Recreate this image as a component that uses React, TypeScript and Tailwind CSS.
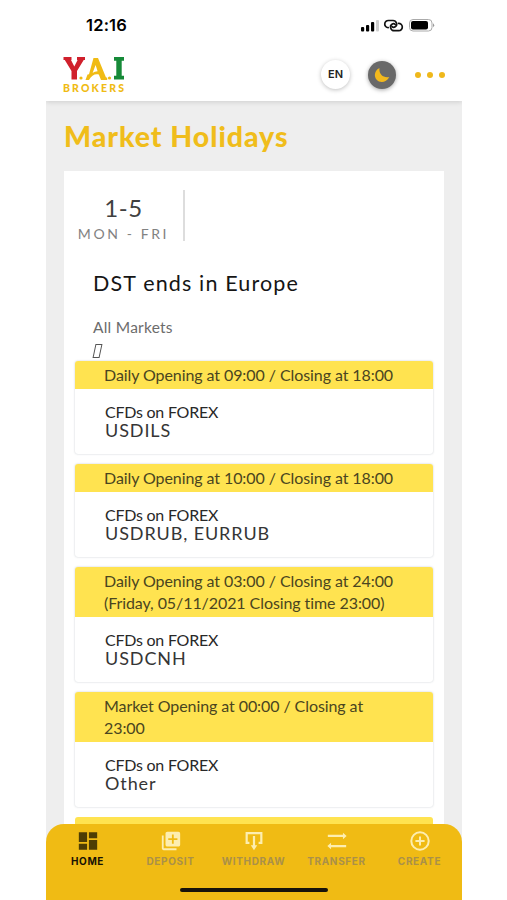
import type { ReactNode } from "react";

interface Session {
  hours: string[];
  symbols: string;
}

const sessions: Session[] = [
  { hours: ["Daily Opening at 09:00 / Closing at 18:00"], symbols: "USDILS" },
  {
    hours: ["Daily Opening at 10:00 / Closing at 18:00"],
    symbols: "USDRUB, EURRUB",
  },
  {
    hours: [
      "Daily Opening at 03:00 / Closing at 24:00",
      "(Friday, 05/11/2021 Closing time 23:00)",
    ],
    symbols: "USDCNH",
  },
  { hours: ["Market Opening at 00:00 / Closing at", "23:00"], symbols: "Other" },
];

const navItems: { label: string; icon: ReactNode }[] = [
  {
    label: "HOME",
    icon: (
      <path
        fill="#4d3d04"
        d="M2 13h9V2.500H2V13zm0 8.500h9V15H2v6.500zm11 0h9V11h-9v10.500zm0-19V9h9V2.500h-9z"
      />
    ),
  },
  {
    label: "DEPOSIT",
    icon: (
      <path
        fill="#fdeeb0"
        d="M4 6H2v14c0 1.1.9 2 2 2h14v-2H4V6zm16-4H8c-1.1 0-2 .9-2 2v12c0 1.1.9 2 2 2h12c1.1 0 2-.9 2-2V4c0-1.1-.9-2-2-2zm-1 9h-4v4h-2v-4H9V9h4V5h2v4h4v2z"
      />
    ),
  },
  {
    label: "WITHDRAW",
    icon: (
      <>
        <path
          fill="none"
          stroke="#fdeeb0"
          strokeWidth="2.4"
          d="M7 14H4V3.500h16V14h-3M12 6.500V18"
        />
        <path fill="#fdeeb0" d="M8.500 16.500h7L12 22z" />
      </>
    ),
  },
  {
    label: "TRANSFER",
    icon: (
      <>
        <path
          fill="none"
          stroke="#fdeeb0"
          strokeWidth="2.4"
          d="M2 6.500h17M5 17.500h17"
        />
        <path fill="#fdeeb0" d="M18.500 3l4 3.500-4 3.500zM5.500 14l-4 3.500 4 3.500z" />
      </>
    ),
  },
  {
    label: "CREATE",
    icon: (
      <path
        fill="none"
        stroke="#fdeeb0"
        strokeWidth="2.2"
        d="M12 2.500a9.500 9.500 0 1 0 0 19 9.500 9.500 0 0 0 0-19M12 7v10M7 12h10"
      />
    ),
  },
];

const StatusBar = () => (
  <div className="flex h-[50px] items-center justify-between pr-[27px] pl-[40px]">
    <span className="font-['Inter',sans-serif] text-[16.5px] font-semibold tracking-[0.2px] text-black">
      12:16
    </span>
    <svg width="75" height="16" viewBox="0 0 75 16">
      <rect x="1" y="10" width="3.200" height="4.500" rx="1" />
      <rect x="6" y="8" width="3.200" height="6.500" rx="1" />
      <rect x="11" y="5" width="3.200" height="9.500" rx="1" />
      <rect x="16" y="3" width="3" height="11.500" rx="1" fill="#cfcfcf" />
      <g fill="none" stroke="#111" strokeWidth="1.700" strokeLinecap="round">
        <path d="M28.200 10.700a3.600 3.600 0 0 1 .3-7.200h4.500c3.500 0 5 4.500 2.200 6.300-1.200.8-2.500.5-3.200-.2" />
        <path d="M38.500 6.300a3.700 3.700 0 0 1 .2 7.400h-4.500c-3.500 0-5-4.600-2.200-6.400 1.200-.8 2.500-.5 3.200.2" />
      </g>
      <rect x="49.500" y="2.500" width="22.500" height="11.500" rx="3.500" fill="none" stroke="#aaa" />
      <rect x="51" y="4" width="17" height="8.500" rx="2" />
      <path d="M73 6.300q2.400 2 0 4z" fill="#999" />
    </svg>
  </div>
);

const Logo = () => (
  <svg width="64" height="38" viewBox="0 0 64 38">
    <path
      fill="#d0202c"
      d="M.500 1h8v3H8l3.300 6.500L14.600 4H14V1h8v3h-1.300L14 15v8.500H8.500V15L1.800 4H.500z"
    />
    <path
      fill="#f0bb14"
      d="M30.500 2h4.500l8 19.500h1.200v2.500H38l-2.200-5.500c-4-1-7.300 1-9.800 5.500h-3.500l2-5.500 1.500-.3zM32.600 9l-3 8c1.600-1.200 3-1.600 5-1.700z"
    />
    <circle cx="18" cy="22" r="1.600" fill="#f0bb14" />
    <circle cx="46.500" cy="22" r="1.600" fill="#f0bb14" />
    <path fill="#168a38" d="M51 1h10v3.800h-2.300v15H61v3.700H51v-3.700h2.300v-15H51z" />
    <text
      x="0"
      y="35.500"
      fill="#f0bb14"
      fontFamily="Lato, sans-serif"
      fontSize="10.500"
      fontWeight="900"
      textLength="61"
    >
      BROKERS
    </text>
  </svg>
);

const Header = () => (
  <div className="flex h-[51px] items-center px-[17px] pb-0.5">
    <Logo />
    <div className="ml-auto flex h-[29px] w-[29px] items-center justify-center rounded-full bg-white font-['Inter',sans-serif] text-[11px] font-semibold text-[#222] shadow-[0_1px_4px_rgba(0,0,0,0.25)]">
      EN
    </div>
    <div className="ml-[18px] flex h-7 w-7 items-center justify-center rounded-full bg-[#696969] shadow-[0_1px_4px_rgba(0,0,0,0.35)]">
      <svg width="16" height="16" viewBox="0 0 16 16">
        <path
          fill="#f3b91d"
          d="M5.500 1C4.500 6.500 9 11.500 15.300 10 12.500 15.500 6 16.500 2.700 12.800-.5 9.200.5 3.500 5.500 1z"
        />
      </svg>
    </div>
    <div className="ml-[19px] flex gap-1.5">
      <i className="size-[6px] rounded-full bg-[#efb81b]" />
      <i className="size-[6px] rounded-full bg-[#efb81b]" />
      <i className="size-[6px] rounded-full bg-[#efb81b]" />
    </div>
  </div>
);

const SessionCard = ({ hours, symbols }: Session) => (
  <div className="mb-[10px] overflow-hidden rounded-[3px] shadow-[0_0_2px_rgba(80,95,110,0.35)]">
    <div className="bg-[#ffe350] py-[3px] pl-[29px] text-[16px] leading-[22px] tracking-[-0.08px] whitespace-nowrap text-[#4a4520]">
      {hours.map((line) => (
        <p key={line}>{line}</p>
      ))}
    </div>
    <div className="h-[65px] pt-[13px] pl-[30px] whitespace-nowrap">
      <p className="text-[16px] leading-[19px] tracking-[-0.25px] text-[#282828]">
        CFDs on FOREX
      </p>
      <p className="text-[18px] leading-[19px] tracking-[0.9px] text-[#353535]">
        {symbols}
      </p>
    </div>
  </div>
);

const BottomNav = () => (
  <nav className="absolute inset-x-0 bottom-0 h-[76px] rounded-t-[18px] bg-[#f0bb14] pt-[6px]">
    <div className="mr-px grid grid-cols-5">
      {navItems.map(({ label, icon }, index) => (
        <div key={label} className="flex flex-col items-center">
          <svg width="22" height="22" viewBox="0 0 24 24">
            {icon}
          </svg>
          <span
            className={`mt-[3px] font-['Inter',sans-serif] text-[10px] leading-[12px] font-bold ${index === 0 ? "tracking-[0.6px] text-[#171204]" : "tracking-[0.65px] text-[#aa9049]"}`}
          >
            {label}
          </span>
        </div>
      ))}
    </div>
    <div className="mx-auto mt-[21px] h-1 w-[148px] rounded-full bg-[#17130a]" />
  </nav>
);

const App = () => (
  <div className="h-[900px] w-[507px] overflow-hidden bg-white font-['Lato',sans-serif]">
    <div className="relative ml-[46px] flex h-full w-[416px] flex-col overflow-hidden bg-[#eee]">
      <div className="relative z-10 bg-white shadow-[0_1px_5px_rgba(0,0,0,0.14)]">
        <StatusBar />
        <Header />
      </div>
      <h1 className="mt-[17px] ml-[18px] text-[28.5px] leading-[36px] font-black tracking-[0.95px] whitespace-nowrap text-[#f0bd1b]">
        Market Holidays
      </h1>
      <main className="mx-[18px] mt-[17px] flex-1 bg-white">
        <div className="mt-[19px] flex h-[51px] w-[121px] flex-col items-center border-r-2 border-[#ddd] pt-[3px] whitespace-nowrap">
          <span className="text-[24px] leading-[30px] tracking-[0.5px] text-[#404040]">
            1-5
          </span>
          <span className="mt-px text-[14px] leading-[20px] tracking-[2.6px] text-[#828282]">
            MON - FRI
          </span>
        </div>
        <div className="h-[120px] pt-[28px] pl-[29px] whitespace-nowrap">
          <h2 className="text-[21.5px] leading-[28px] tracking-[1.15px] text-[#151515]">
            DST ends in Europe
          </h2>
          <p className="mt-[19px] text-[15.5px] leading-[22px] tracking-[0.25px] text-[#6c6c6c]">
            All Markets
          </p>
          <i className="mt-[6px] ml-px block h-[14px] w-[7px] -skew-x-12 border border-[#555]" />
        </div>
        <div className="mx-[11px]">
          {sessions.map((session) => (
            <SessionCard key={session.symbols} {...session} />
          ))}
          <div className="h-7 rounded-t-[3px] bg-[#ffe350]" />
        </div>
      </main>
      <BottomNav />
    </div>
  </div>
);

export default App;
